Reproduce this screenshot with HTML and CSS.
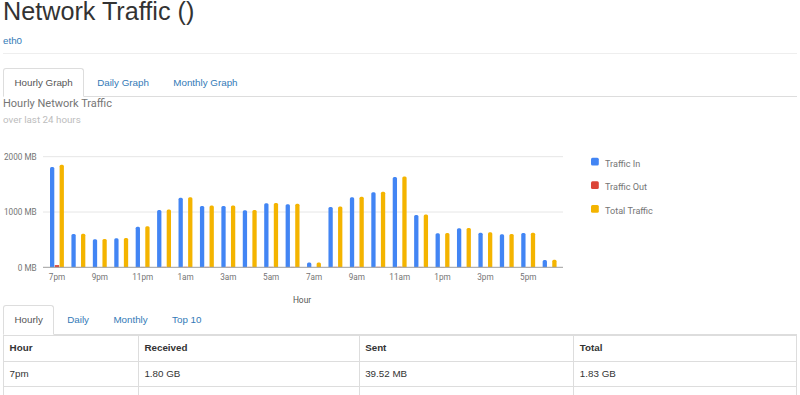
FILE: index.html
```html
<!DOCTYPE html>
<html lang="en">
<head>
<meta charset="UTF-8">
<title>Network Traffic</title>
<link rel="stylesheet" href="styles.css">
</head>
<body>

<div class="container">
  <div class="page-header">
    <h1>Network Traffic ()</h1>
    <a href="#" class="iface">eth0</a>
  </div>

  <ul class="nav-tabs">
    <li class="active"><a href="#">Hourly Graph</a></li>
    <li><a href="#">Daily Graph</a></li>
    <li><a href="#">Monthly Graph</a></li>
  </ul>

  <div class="graph">
    <div class="graph-title">Hourly Network Traffic</div>
    <div class="graph-subtitle">over last 24 hours</div>
    <svg id="hourlyChart" class="chart" width="794" height="178" viewBox="0 0 794 178"></svg>
  </div>

  <ul class="nav-tabs">
    <li class="active"><a href="#">Hourly</a></li>
    <li><a href="#">Daily</a></li>
    <li><a href="#">Monthly</a></li>
    <li><a href="#">Top 10</a></li>
  </ul>

  <table class="table">
    <colgroup>
      <col class="col-hour">
      <col class="col-received">
      <col class="col-sent">
      <col class="col-total">
    </colgroup>
    <thead>
      <tr><th>Hour</th><th>Received</th><th>Sent</th><th>Total</th></tr>
    </thead>
    <tbody>
      <tr><td>7pm</td><td>1.80 GB</td><td>39.52 MB</td><td>1.83 GB</td></tr>
      <tr><td>8pm</td><td>601.84 MB</td><td>6.12 MB</td><td>607.96 MB</td></tr>
    </tbody>
  </table>
</div>

<script>
// hourly data in MB: [label, received, sent]
var hours = [
  ['7pm', 1814, 39.5], ['8pm', 602, 6], ['9pm', 506, 5], ['10pm', 524, 5],
  ['11pm', 734, 7], ['12am', 1036, 8], ['1am', 1259, 9], ['2am', 1108, 8],
  ['3am', 1108, 8], ['4am', 1031, 7], ['5am', 1157, 8], ['6am', 1139, 8],
  ['7am', 87, 2], ['8am', 1090, 8], ['9am', 1266, 9], ['10am', 1356, 9],
  ['11am', 1633, 10], ['12pm', 946, 7], ['1pm', 615, 6], ['2pm', 705, 6],
  ['3pm', 626, 6], ['4pm', 597, 6], ['5pm', 620, 6], ['6pm', 132, 3]
];

var svg = document.getElementById('hourlyChart');
var NS = 'http://www.w3.org/2000/svg';
var base = 140.3;       // y of 0 MB
var scale = 0.0553;     // px per MB
var left = 40, right = 560;

function add(tag, attrs, text) {
  var el = document.createElementNS(NS, tag);
  for (var k in attrs) el.setAttribute(k, attrs[k]);
  if (text) el.textContent = text;
  svg.appendChild(el);
  return el;
}

function bar(x, mb, color) {
  var w = 4.3, h = mb * scale, top = base - h, r = 1.5;
  if (h < 0.3) return;
  if (h < r * 2) {
    add('rect', { x: x, y: top, width: w, height: h, fill: color });
    return;
  }
  var d = 'M' + x + ',' + base + ' V' + (top + r) +
          ' Q' + x + ',' + top + ' ' + (x + r) + ',' + top +
          ' H' + (x + w - r) +
          ' Q' + (x + w) + ',' + top + ' ' + (x + w) + ',' + (top + r) +
          ' V' + base + ' Z';
  add('path', { d: d, fill: color });
}

// grid lines
[2000, 1000].forEach(function (v) {
  var y = base - v * scale;
  add('line', { x1: left, x2: right, y1: y, y2: y, stroke: '#e6e6e6', 'stroke-width': 1 });
});

// y labels
[['2000 MB', 2000], ['1000 MB', 1000], ['0 MB', 0]].forEach(function (l) {
  add('text', { x: 33.7, y: base - l[1] * scale + 3.2, 'text-anchor': 'end', 'class': 'axis-label' }, l[0]);
});

// bars
hours.forEach(function (row, i) {
  var x = 47 + 21.42 * i;
  bar(x, row[1], '#4285f4');
  bar(x + 4.8, row[2], '#db4437');
  bar(x + 9.6, row[1] + row[2], '#f4b400');
  if (i % 2 === 0) {
    add('text', { x: x + 7, y: 153, 'text-anchor': 'middle', 'class': 'axis-label' }, row[0]);
  }
});

// baseline
add('line', { x1: left, x2: right, y1: base, y2: base, stroke: '#9e9e9e', 'stroke-width': 1 });

add('text', { x: 299, y: 176, 'text-anchor': 'middle', 'class': 'axis-title' }, 'Hour');

// legend
[['Traffic In', '#4285f4'], ['Traffic Out', '#db4437'], ['Total Traffic', '#f4b400']].forEach(function (l, i) {
  var y = 30.7 + 23.6 * i;
  add('rect', { x: 588, y: y, width: 7.8, height: 7.8, rx: 1.5, fill: l[1] });
  add('text', { x: 602, y: y + 9, 'class': 'legend-label' }, l[0]);
});
</script>
</body>
</html>
```

FILE: styles.css
```css
body {
  margin: 0;
  font-family: "Liberation Sans", Arial, sans-serif;
  font-size: 9.8px;
  line-height: 14px;
  color: #333;
  background-color: #fff;
}

.container {
  padding: 0 3px;
}

.page-header {
  padding-bottom: 5px;
  margin-bottom: 14.5px;
  border-bottom: 1px solid #eee;
}

.page-header h1 {
  margin: -2px 0 8px;
  font-size: 25.2px;
  line-height: 27.7px;
  font-weight: 500;
}

.iface {
  display: block;
  color: #337ab7;
  text-decoration: none;
}

.nav-tabs {
  display: flex;
  list-style: none;
  margin: 0;
  padding: 0;
  border-bottom: 1px solid #ddd;
}

.nav-tabs li {
  margin-bottom: -1px;
  margin-right: 1.4px;
}

.nav-tabs a {
  display: block;
  padding: 6.6px 10.5px;
  border: 1px solid transparent;
  border-radius: 3px 3px 0 0;
  color: #337ab7;
  text-decoration: none;
}

.nav-tabs .active a {
  color: #555;
  background-color: #fff;
  border-color: #ddd #ddd transparent;
}

/* chart */
.graph-title {
  font-family: Roboto, sans-serif;
  font-size: 11px;
  line-height: 14px;
  color: #757575;
}

.graph-subtitle {
  margin-top: 2px;
  font-family: Roboto, sans-serif;
  font-size: 9.8px;
  line-height: 14px;
  color: #bdbdbd;
}

.chart {
  display: block;
}

.chart .axis-label {
  font-family: Roboto, sans-serif;
  font-size: 8.2px;
  fill: #757575;
}

.chart .axis-title {
  font-family: Roboto, sans-serif;
  font-size: 8.4px;
  fill: #555;
}

.chart .legend-label {
  font-family: Roboto, sans-serif;
  font-size: 9.1px;
  fill: #757575;
}

/* table */
.table {
  width: 100%;
  border-collapse: collapse;
}

.table th,
.table td {
  padding: 5.6px;
  border: 1px solid #ddd;
  text-align: left;
  vertical-align: top;
}

.table th {
  font-weight: bold;
}

.table tbody td {
  padding-top: 5px;
  padding-bottom: 5px;
}

.col-hour { width: 135px; }
.col-received { width: 221px; }
.col-sent { width: 215px; }
.col-total { width: 223px; }
```
